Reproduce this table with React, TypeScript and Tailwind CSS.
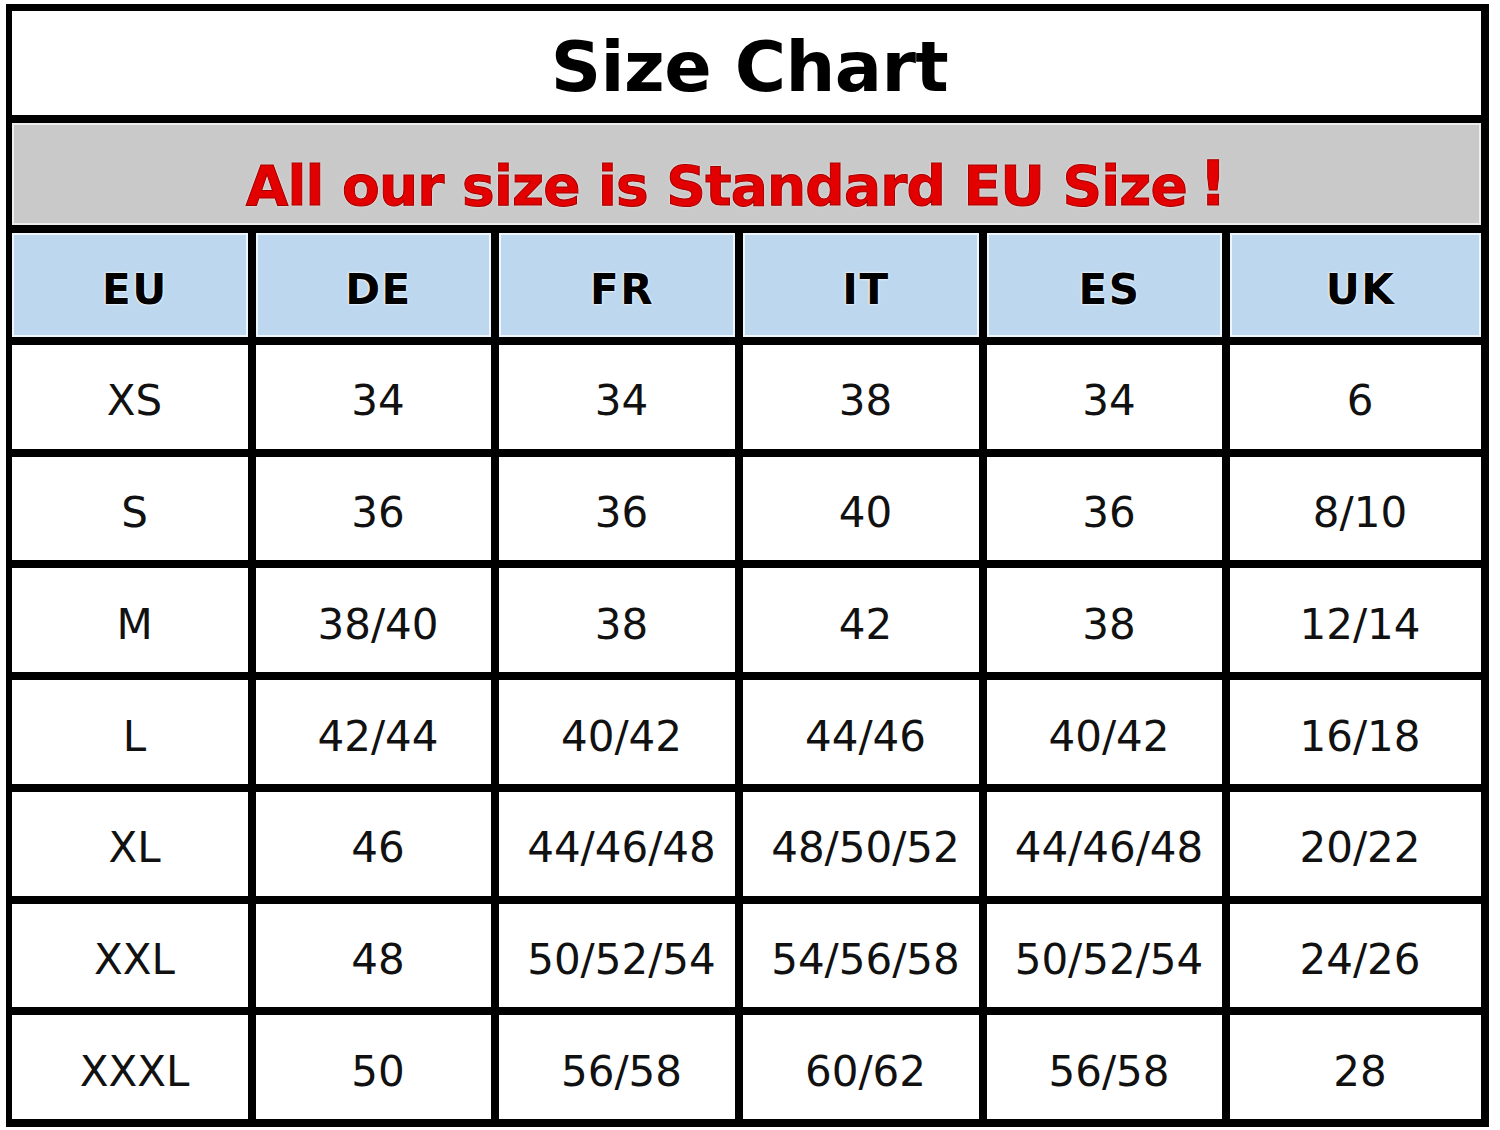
const columns = ['EU', 'DE', 'FR', 'IT', 'ES', 'UK']

const rows = [
  ['XS', '34', '34', '38', '34', '6'],
  ['S', '36', '36', '40', '36', '8/10'],
  ['M', '38/40', '38', '42', '38', '12/14'],
  ['L', '42/44', '40/42', '44/46', '40/42', '16/18'],
  ['XL', '46', '44/46/48', '48/50/52', '44/46/48', '20/22'],
  ['XXL', '48', '50/52/54', '54/56/58', '50/52/54', '24/26'],
  ['XXXL', '50', '56/58', '60/62', '56/58', '28'],
]

export default function App() {
  return (
    <div className="w-[1500px] h-[1130px] bg-white pt-[4px] pl-[6px] font-['DejaVu_Sans',Verdana,sans-serif]">
      <div className="w-[1483px] h-[1123px] bg-black pt-[7px] pl-[6px] pr-[8px] pb-[8px] flex flex-col gap-2">
        {/* title */}
        <div className="h-[104px] shrink-0 bg-white flex items-center justify-center pl-[6px]">
          <h1 className="text-[70px] font-bold leading-none tracking-[-0.6px] text-black pt-[8px]">
            Size Chart
          </h1>
        </div>

        {/* notice */}
        <div className="h-[102px] shrink-0 bg-[#c9c9c9] border-2 border-[#ededed] flex items-end justify-center pb-[8px] pr-[20px]">
          <p className="text-[55px] font-bold leading-none tracking-[-0.8px] text-[#e30000] [-webkit-text-stroke:1px_#a00000] [text-shadow:0_0_3px_#ffe4e4,0_0_2px_#ffe4e4]">
            All our size is Standard EU Size
            <span className="ml-[12px] text-[62px] tracking-normal">!</span>
          </p>
        </div>

        {/* header row */}
        <div className="h-[104px] shrink-0 grid grid-cols-[236px_235px_236px_236px_235px_1fr] gap-2">
          {columns.map((col) => (
            <div
              key={col}
              className="bg-[#bdd7ee] border-2 border-[#eef6fd] flex items-center justify-center pt-[10px] pl-[10px]"
            >
              <span className="text-[42px] font-bold leading-none tracking-[1.5px] text-black [text-shadow:0_0_3px_#fff,0_0_2px_#fff]">
                {col}
              </span>
            </div>
          ))}
        </div>

        {/* data rows */}
        {rows.map((row) => (
          <div key={row[0]} className="flex-1 grid grid-cols-[236px_235px_236px_236px_235px_1fr] gap-2">
            {row.map((val, i) => (
              <div key={i} className="bg-white flex items-center justify-center pt-[9px] pl-[9px]">
                <span className="text-[42px] leading-none text-[#111]">{val}</span>
              </div>
            ))}
          </div>
        ))}
      </div>
    </div>
  )
}
